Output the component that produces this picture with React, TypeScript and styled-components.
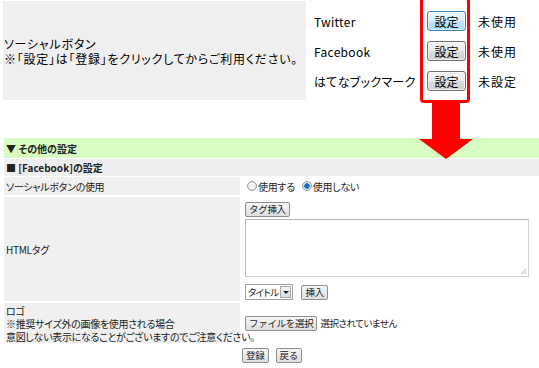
import React from "react";
import styled, { createGlobalStyle } from "styled-components";

const GlobalStyle = createGlobalStyle`
  html, body {
    margin: 0;
    padding: 0;
    background: #ffffff;
    overflow: hidden;
  }
  body {
    font-family: "Noto Sans CJK JP", "Liberation Sans", sans-serif;
    color: #000;
  }
`;

const Page = styled.div`
  position: relative;
  width: 539px;
  height: 368px;
  overflow: hidden;
`;

// ---- top: social button list ----

const TopSection = styled.div`
  display: flex;
  margin: 1px 0 0 3px;
  height: 99px;
`;

const TopLabel = styled.div`
  width: 302px;
  background: #efefef;
  display: flex;
  flex-direction: column;
  justify-content: center;
  font-size: 12px;
  line-height: 15px;
  font-feature-settings: "palt";
  letter-spacing: 0.75px;
  padding-left: 1px;
  padding-top: 1px;
`;

const ServiceList = styled.div`
  display: flex;
  flex-direction: column;
  padding: 5px 0 0 8px;
`;

const ServiceRow = styled.div`
  display: flex;
  align-items: center;
  height: 30px;
  font-size: 12px;
`;

const ServiceName = styled.span`
  width: 113px;
  letter-spacing: 0.3px;
  white-space: nowrap;
  font-feature-settings: "palt";
`;

const SetupButton = styled.button<{ $active?: boolean }>`
  width: 39px;
  height: 20px;
  padding: 0;
  font-family: inherit;
  font-size: 12px;
  color: #000;
  border-radius: 3px;
  border: 1px solid ${(p) => (p.$active ? "#3c7fb1" : "#707070")};
  background: ${(p) =>
    p.$active
      ? "linear-gradient(#eaf6fd 0%, #d9f0fc 50%, #bee6fd 51%, #a7d9f5 100%)"
      : "linear-gradient(#f2f2f2 0%, #ebebeb 50%, #dddddd 51%, #cfcfcf 100%)"};
  box-shadow: inset 0 0 0 1px rgba(255, 255, 255, 0.6);
`;

const Status = styled.span`
  margin-left: 12px;
  letter-spacing: 1px;
`;

// ---- annotation ----

const Highlight = styled.div`
  position: absolute;
  left: 420px;
  top: -3px;
  width: 50px;
  height: 106px;
  box-sizing: border-box;
  border: 3px solid #ff0000;
  border-radius: 4px;
`;

const DownArrow = styled.svg`
  position: absolute;
  left: 419px;
  top: 103px;
`;

// ---- lower: settings table ----

const Settings = styled.div`
  margin: 38px 0 0 4px;
  width: 536px;
  display: flex;
  flex-direction: column;
  font-size: 10px;
  color: #222;
  font-feature-settings: "palt";
`;

const SectionBar = styled.div`
  height: 20px;
  background: #d9fcc2;
  display: flex;
  align-items: center;
  padding-left: 2px;
  font-weight: bold;
  font-size: 10px;
`;

const SubBar = styled.div`
  height: 17px;
  margin-top: 1px;
  background: #eeeeee;
  display: flex;
  align-items: center;
  padding-left: 2px;
  font-weight: bold;
`;

const FormRow = styled.div<{ $h: number }>`
  display: grid;
  grid-template-columns: 236px 1fr;
  column-gap: 2px;
  height: ${(p) => p.$h}px;
  margin-top: ${(p) => (p.$h < 30 ? 1 : 2)}px;
`;

const LabelCell = styled.div`
  background: #f0f0f0;
  display: flex;
  flex-direction: column;
  justify-content: center;
  padding-left: 2px;
  line-height: 13px;
  letter-spacing: -0.3px;
  white-space: nowrap;
`;

const ValueCell = styled.div<{ $center?: boolean }>`
  display: flex;
  flex-direction: column;
  justify-content: ${(p) => (p.$center ? "center" : "flex-start")};
  align-items: flex-start;
  padding-left: 3px;
`;

const RadioGroup = styled.div`
  display: flex;
  align-items: center;
  gap: 7px;
  margin-left: 2px;
  letter-spacing: -0.3px;
`;

const RadioLabel = styled.label`
  display: flex;
  align-items: center;
  gap: 1px;
`;

const RadioDot = styled.span<{ $checked?: boolean }>`
  width: 8px;
  height: 8px;
  border-radius: 50%;
  border: 1px solid #9a9a9a;
  background: ${(p) =>
    p.$checked
      ? "radial-gradient(circle, #1a6fc4 0 2.5px, #d6e4f0 3px)"
      : "radial-gradient(circle, #f4f4f4 0 3px, #dcdcdc 4px)"};
`;

const SmallButton = styled.button`
  height: 15px;
  padding: 0 3px;
  font-family: inherit;
  font-size: 9.5px;
  letter-spacing: -0.3px;
  line-height: 13px;
  color: #222;
  border: 1px solid #8f8f8f;
  border-radius: 2px;
  background: linear-gradient(#f6f6f6, #dedede);
  white-space: nowrap;
`;

const TagArea = styled.div`
  width: 284px;
  height: 58px;
  margin-top: 2px;
  box-sizing: border-box;
  border: 1px solid #b8b8b8;
  border-right-color: #d0d0d0;
  border-bottom-color: #d0d0d0;
  position: relative;
`;

const Grip = styled.svg`
  position: absolute;
  right: 1px;
  bottom: 1px;
`;

const InsertLine = styled.div`
  display: flex;
  align-items: center;
  gap: 8px;
  margin-top: 7px;
`;

const FakeSelect = styled.div`
  display: flex;
  align-items: center;
  gap: 2px;
  height: 14px;
  border: 1px solid #a0a0a0;
  padding-left: 2px;
  background: #fff;
  font-size: 9.5px;
  letter-spacing: -0.6px;
  white-space: nowrap;
`;

const SelectArrow = styled.span`
  width: 11px;
  height: 12px;
  margin-right: 1px;
  border: 1px solid #a8a8a8;
  box-sizing: border-box;
  background: linear-gradient(#f4f4f4, #dcdcdc);
  display: flex;
  align-items: center;
  justify-content: center;
  &::after {
    content: "";
    border-left: 3px solid transparent;
    border-right: 3px solid transparent;
    border-top: 3px solid #222;
  }
`;

const FileLine = styled.div`
  display: flex;
  align-items: center;
  gap: 3px;
  font-size: 9.5px;
  letter-spacing: -0.5px;
`;

const Footer = styled.div`
  display: flex;
  justify-content: center;
  gap: 7px;
  margin-top: 5px;
`;

const services = [
  { name: "Twitter", status: "未使用", active: true },
  { name: "Facebook", status: "未使用" },
  { name: "はてなブックマーク", status: "未設定" },
];

export default function App() {
  return (
    <Page>
      <GlobalStyle />
      <TopSection>
        <TopLabel>
          <div>ソーシャルボタン</div>
          <div>※「設定」は「登録」をクリックしてからご利用ください。</div>
        </TopLabel>
        <ServiceList>
          {services.map((s) => (
            <ServiceRow key={s.name}>
              <ServiceName>{s.name}</ServiceName>
              <SetupButton $active={s.active}>設定</SetupButton>
              <Status>{s.status}</Status>
            </ServiceRow>
          ))}
        </ServiceList>
      </TopSection>

      <Settings>
        <SectionBar>▼ その他の設定</SectionBar>
        <SubBar>■ [Facebook]の設定</SubBar>
        <FormRow $h={18}>
          <LabelCell>ソーシャルボタンの使用</LabelCell>
          <ValueCell $center>
            <RadioGroup>
              <RadioLabel>
                <RadioDot />
                使用する
              </RadioLabel>
              <RadioLabel>
                <RadioDot $checked />
                使用しない
              </RadioLabel>
            </RadioGroup>
          </ValueCell>
        </FormRow>
        <FormRow $h={104}>
          <LabelCell>HTMLタグ</LabelCell>
          <ValueCell>
            <SmallButton style={{ marginTop: 5 }}>タグ挿入</SmallButton>
            <TagArea>
              <Grip width="7" height="7" viewBox="0 0 7 7">
                <path d="M6 1 L1 6 M6 3.5 L3.5 6 M6 5.5 L5.5 6" stroke="#a0a0a0" strokeWidth="0.8" />
              </Grip>
            </TagArea>
            <InsertLine>
              <FakeSelect>
                タイトル
                <SelectArrow />
              </FakeSelect>
              <SmallButton>挿入</SmallButton>
            </InsertLine>
          </ValueCell>
        </FormRow>
        <FormRow $h={40}>
          <LabelCell>
            <div>ロゴ</div>
            <div>※推奨サイズ外の画像を使用される場合</div>
            <div>意図しない表示になることがございますのでご注意ください。</div>
          </LabelCell>
          <ValueCell $center>
            <FileLine>
              <SmallButton>ファイルを選択</SmallButton>
              選択されていません
            </FileLine>
          </ValueCell>
        </FormRow>
        <Footer>
          <SmallButton>登録</SmallButton>
          <SmallButton>戻る</SmallButton>
        </Footer>
      </Settings>

      <Highlight />
      <DownArrow width="54" height="57" viewBox="0 0 54 57">
        <polygon points="13,0 41,0 41,36 54,36 27,56 0,36 13,36" fill="#ff0000" />
      </DownArrow>
    </Page>
  );
}
